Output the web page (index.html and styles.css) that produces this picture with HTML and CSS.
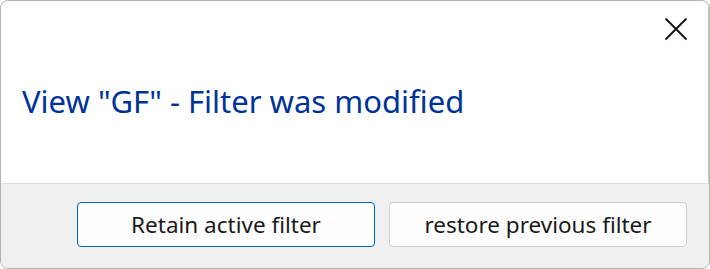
FILE: index.html
```html
<!DOCTYPE html>
<html lang="en">
<head>
    <meta charset="UTF-8">
    <title>Filter was modified</title>
    <link rel="stylesheet" href="styles.css">
</head>
<body>
    <div class="dialog">
        <div class="dialog-body">
            <div class="close-row">
                <!-- Кнопка закрытия -->
                <svg class="close" width="24" height="24" viewBox="0 0 24 24">
                    <path d="M1.5 1.5 L22.5 22.5 M22.5 1.5 L1.5 22.5" stroke="#1a1a1a" stroke-width="2" fill="none"/>
                </svg>
            </div>
            <div class="title">View "GF" - Filter was modified</div>
        </div>
        <div class="footer">
            <button class="btn btn-default">Retain active filter</button>
            <button class="btn">restore previous filter</button>
        </div>
    </div>
</body>
</html>
```

FILE: styles.css
```css
body {
    margin: 0;
    background: #fff;
    font-family: "Noto Sans", "Open Sans", sans-serif;
}

.dialog {
    width: 710px;
    height: 269px;
    box-sizing: border-box;
    border: 1px solid #b4b4b4;
    border-radius: 8px;
    box-shadow: inset -1px -2px 0 #c8c8c8;
    display: flex;
    flex-direction: column;
    overflow: hidden;
    background: #fff;
}

.dialog-body {
    flex: 1;
}

.close-row {
    display: flex;
    justify-content: flex-end;
    padding: 16px 21px 0 0;
}

.close {
    display: block;
}

.title {
    margin: 40px 0 0 21px;
    font-size: 31px;
    line-height: 40px;
    color: #003399;
}

.footer {
    height: 85px;
    box-sizing: border-box;
    border-top: 1px solid #dedede;
    background: #f0f0f0;
    display: flex;
    justify-content: flex-end;
    align-items: flex-start;
    gap: 14px;
    padding: 18px 22px 0 0;
}

.btn {
    width: 298px;
    height: 45px;
    border: 1px solid #d0d0d0;
    border-radius: 4px;
    background: #fdfdfd;
    font-family: "Noto Sans", "Open Sans", sans-serif;
    font-size: 22.5px;
    color: #1a1a1a;
    padding: 0;
}

.btn-default {
    border-color: #0067c0;
}
```
